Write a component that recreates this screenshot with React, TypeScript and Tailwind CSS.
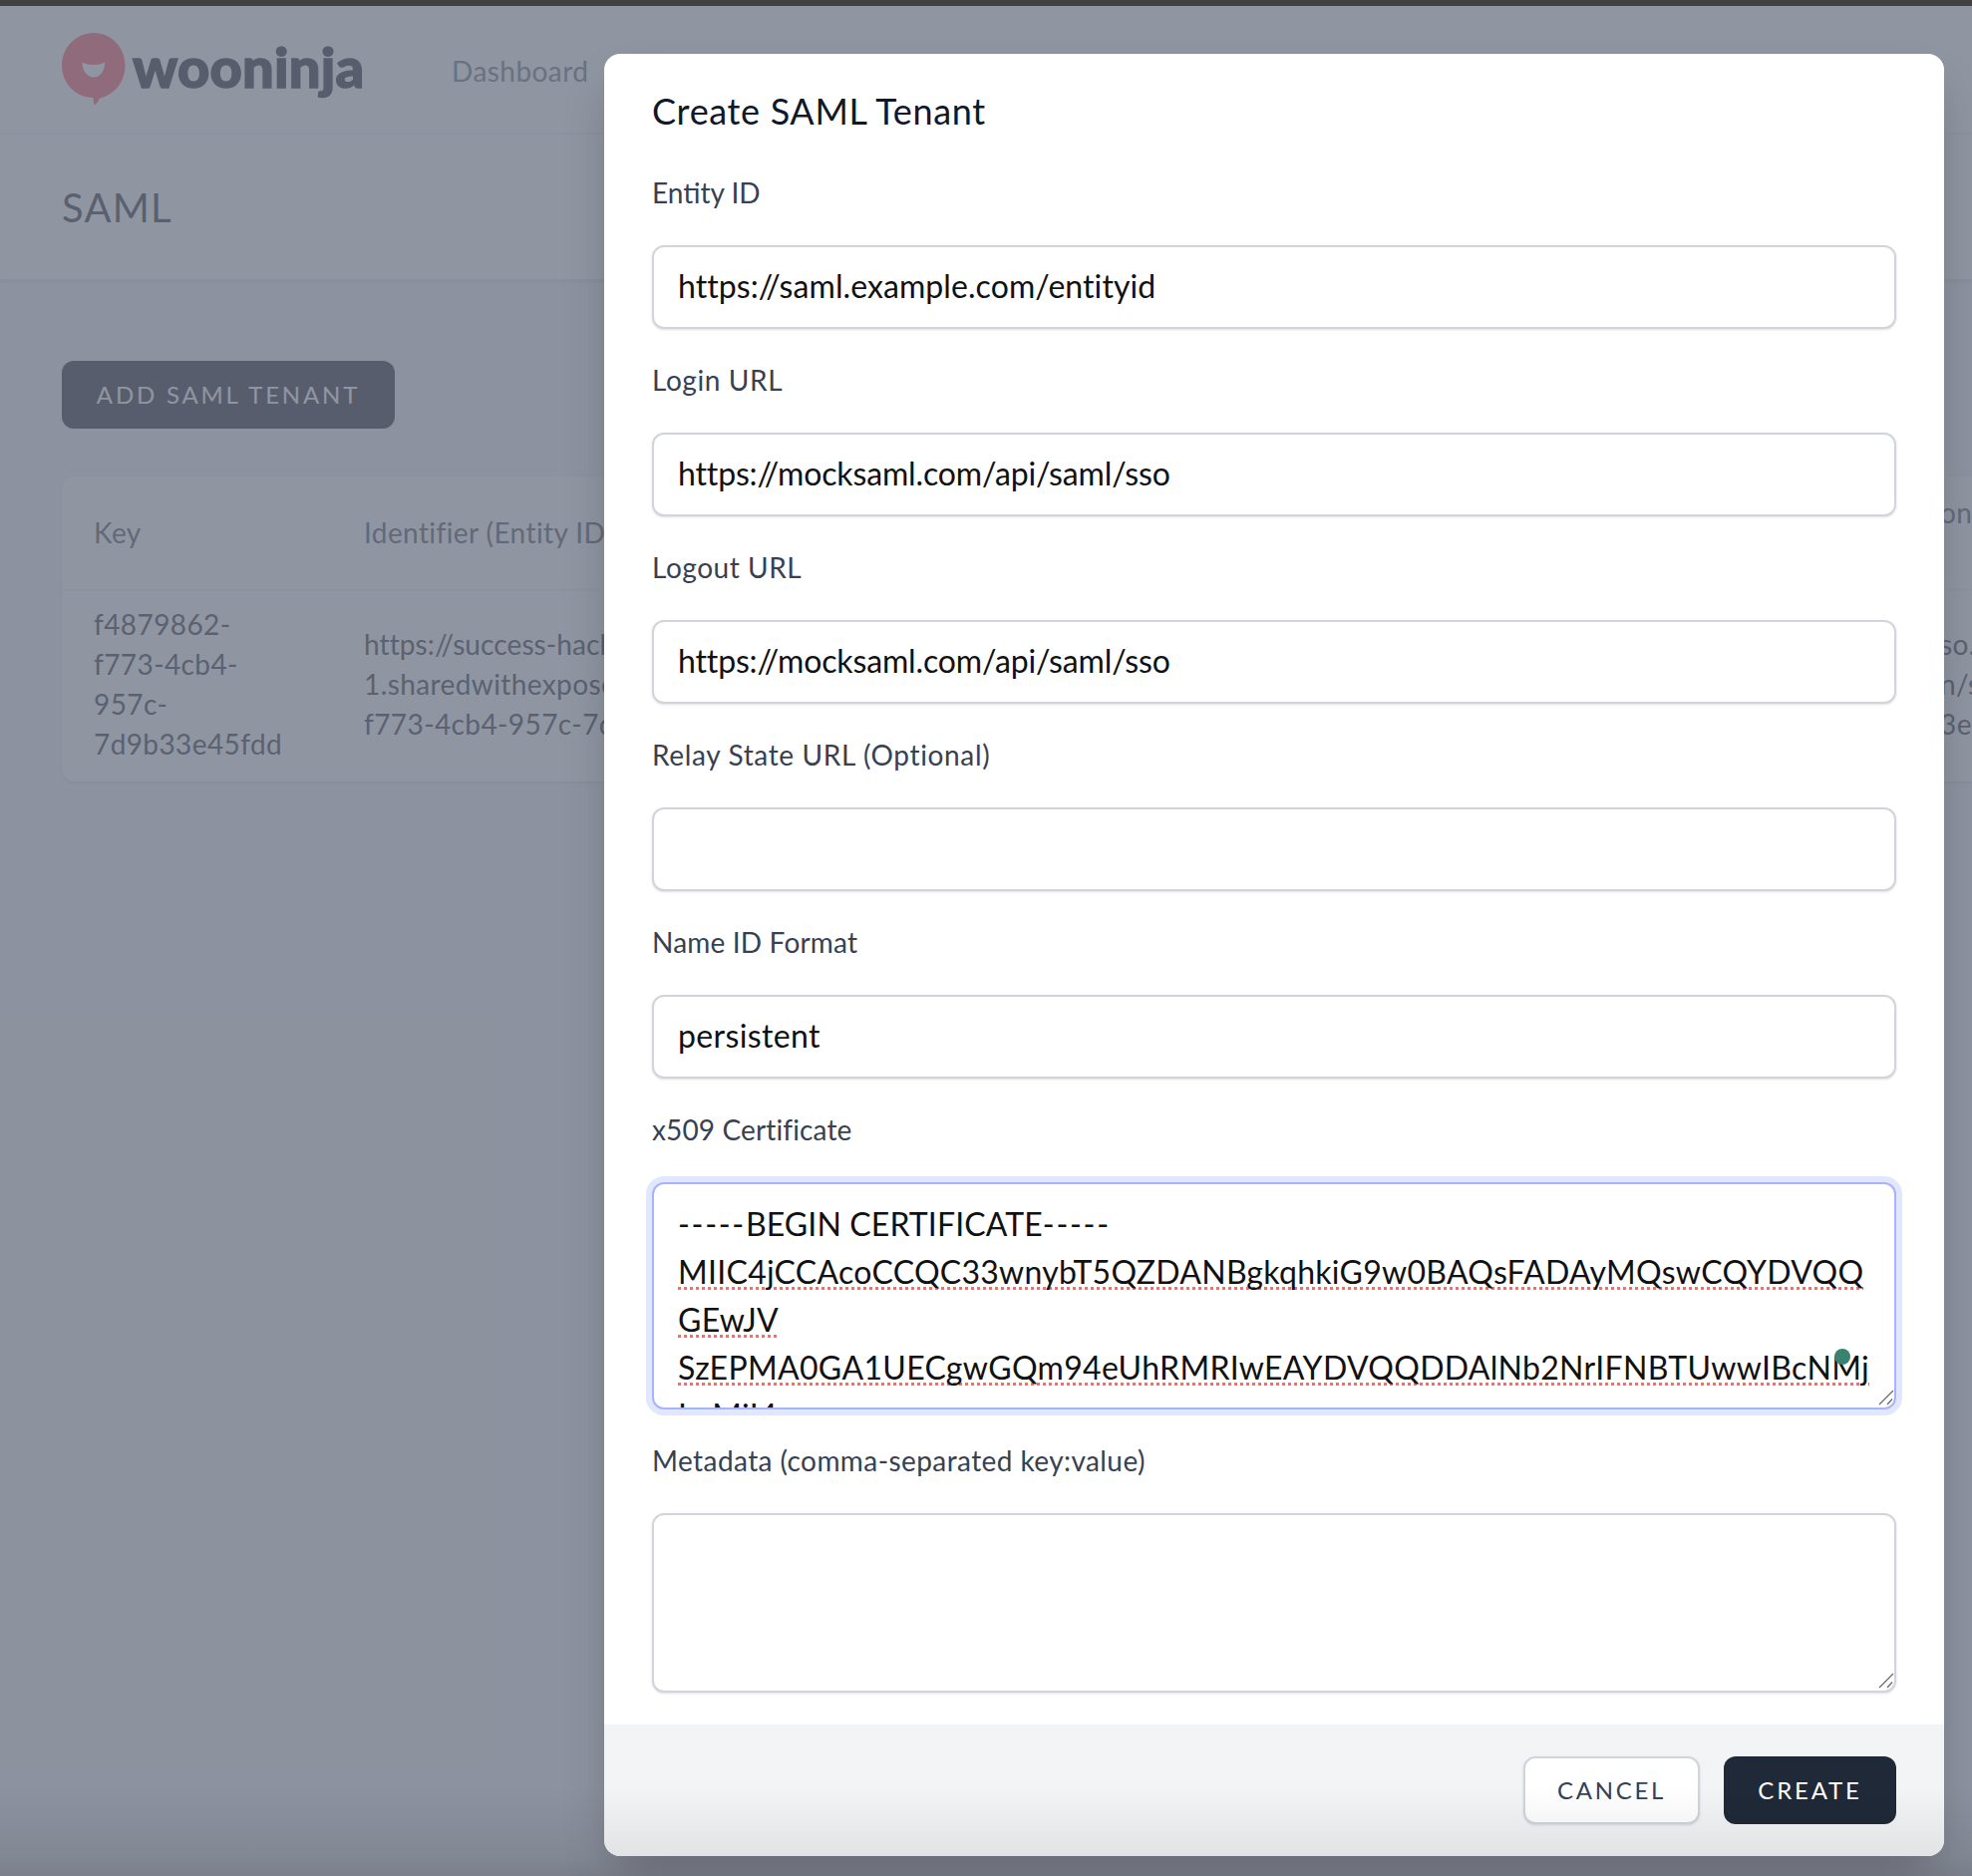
const certLines = [
  { text: 'MIIC4jCCAcoCCQC33wnybT5QZDANBgkqhkiG9w0BAQsFADAyMQswCQYDVQQ', flagged: true, tracking: 'tracking-[0.28px]' },
  { text: 'GEwJV', flagged: true, tracking: 'tracking-[0.28px]' },
  { text: 'SzEPMA0GA1UECgwGQm94eUhRMRIwEAYDVQQDDAlNb2NrIFNBTUwwIBcNMj', flagged: true, tracking: 'tracking-[0.33px]' },
  { text: 'IwMjI4', flagged: false, tracking: 'tracking-[0.3px]' },
]

function Logo() {
  return (
    <div className="flex w-[303px] items-center gap-[7px]">
      <svg width="64" height="74" viewBox="0 0 64 74" className="shrink-0">
        <path
          d="M32 0C49.5 0 63.5 14.5 63.5 32.5C63.5 50 52 62.5 38 65.5C37 68 35 71 32.5 72.5C32 70 31.5 67.5 31.5 65C14 65 0 50.5 0 32.5C0 14.5 14.5 0 32 0Z"
          fill="#ff5a6c"
        />
        <path
          d="M20.5 29.5C23 31 26 32 31.5 32C37 32 40.5 31 43 29.5C43.5 37 39 44.5 32 44.5C25 44.5 20 37 20.5 29.5Z"
          fill="#ffffff"
        />
      </svg>
      <span className="pb-[6px] font-[Lato,sans-serif] text-[56px] leading-none font-black tracking-[0.2px] text-[#272230] [-webkit-text-stroke:1.5px_#272230]">wooninja</span>
    </div>
  )
}

function Field({ label, labelClass, value, valueClass }: { label: string; labelClass: string; value: string; valueClass: string }) {
  return (
    <div className="flex flex-col gap-[32px]">
      <label className={`pb-[2px] text-[28px] leading-[38px] text-[#374151] ${labelClass}`}>{label}</label>
      <input
        readOnly
        defaultValue={value}
        className={`h-[84px] w-full rounded-[12px] border-2 border-[#d1d5db] bg-white px-[24px] pb-[3px] text-[32px] leading-[48px] text-[#111111] shadow-sm outline-none ${valueClass}`}
      />
    </div>
  )
}

function Grip() {
  return (
    <svg width="16" height="16" viewBox="0 0 16 16" className="pointer-events-none absolute right-[2px] bottom-[4px]">
      <path d="M1 15L15 1M9 15L14 9.5" stroke="#6a6a6a" strokeWidth="1.3" fill="none" />
    </svg>
  )
}

export default function App() {
  return (
    <div className="relative h-[1882px] w-[1978px] overflow-hidden bg-[#f3f4f6] font-[Lato,'Noto_Sans',sans-serif]">

      {/* Page behind the dialog */}
      <div className="relative z-10 h-[6px] bg-[#414141]" />
      <div className="bg-white">
        <div className="flex h-[129px] items-center border-b-2 border-[#f3f4f6] pl-[62px]">
          <Logo />
          <span className="ml-[88px] pt-[2px] text-[28px] leading-[38px] tracking-[0.45px] text-[#6b7280]">Dashboard</span>
        </div>
        <div className="flex h-[147px] items-center border-b-2 border-[#e5e7eb] pl-[62px] shadow-sm">
          <h1 className="text-[40px] leading-[56px] tracking-[1.2px] text-[#2c2f3c]">SAML</h1>
        </div>
      </div>
      <div className="px-[62px] pt-[80px]">
        <button className="h-[68px] w-[334px] rounded-[12px] bg-[#272230] text-[24px] tracking-[2.8px] text-white">
          ADD SAML TENANT
        </button>
        <table className="mt-[48px] w-[2052px] table-fixed rounded-[12px] bg-white text-left text-[28px] leading-[40px] tracking-[0.4px] shadow-sm">
          <colgroup>
            <col className="w-[271px]" />
            <col className="w-[1581px]" />
            <col className="w-[200px]" />
          </colgroup>
          <thead>
            <tr className="h-[114px] border-b-2 border-[#f3f4f6] text-[#4b4f5c]">
              <th className="pb-[2px] pl-[32px] font-normal">Key</th>
              <th className="pb-[2px] pl-[32px] font-normal">Identifier (Entity ID)</th>
              <th className="pb-[2px] pl-[32px] font-normal">on<br />&nbsp;</th>
            </tr>
          </thead>
          <tbody className="text-[#2f3240]">
            <tr className="h-[192px]">
              <td className="pb-[5px] pl-[32px]">f4879862-<br />f773-4cb4-<br />957c-<br />7d9b33e45fdd</td>
              <td className="pb-[5px] pl-[32px]"><span className="tracking-[0.1px]">https://success-hack-</span><br />1.sharedwithexpose.com/<br />f773-4cb4-957c-7d9b33e45fdd</td>
              <td className="pb-[5px] pl-[32px]">so.<br />n/s<br />3e</td>
            </tr>
          </tbody>
        </table>
      </div>

      {/* Backdrop and dialog */}
      <div className="absolute inset-0 flex items-start justify-end bg-gray-500/75 pt-[54px] pr-[28px]">
        <div className="w-[1344px] overflow-hidden rounded-[16px] bg-white shadow-2xl">
          <div className="flex flex-col gap-[32px] px-[48px] py-[32px]">
            <h2 className="pb-[5px] text-[36px] leading-[51px] tracking-[0.66px] text-[#111827]">Create SAML Tenant</h2>
            <Field label="Entity ID" labelClass="tracking-normal" value="https://saml.example.com/entityid" valueClass="tracking-[0.08px]" />
            <Field label="Login URL" labelClass="tracking-[0.6px]" value="https://mocksaml.com/api/saml/sso" valueClass="tracking-[-0.15px]" />
            <Field label="Logout URL" labelClass="tracking-[0.55px]" value="https://mocksaml.com/api/saml/sso" valueClass="tracking-[-0.15px]" />
            <Field label="Relay State URL (Optional)" labelClass="tracking-[0.65px]" value="" valueClass="tracking-normal" />
            <Field label="Name ID Format" labelClass="tracking-[0.18px]" value="persistent" valueClass="tracking-[0.38px]" />

            <div className="flex flex-col gap-[32px]">
              <label className="pb-[2px] text-[28px] leading-[38px] tracking-[0.13px] text-[#374151]">x509 Certificate</label>
              <div className="relative">
                <div className="h-[228px] overflow-hidden rounded-[12px] border-2 border-[#a5b4fc] bg-white px-[24px] py-[16px] text-[32px] leading-[48px] whitespace-nowrap text-[#111111] shadow-[0_0_0_6px_#e0e7ff]">
                  <div>
                    <span className="tracking-[1.7px]">-----</span>
                    <span className="tracking-[0.12px]">BEGIN CERTIFICATE</span>
                    <span className="tracking-[1.7px]">-----</span>
                  </div>
                  {certLines.map(line => (
                    <div key={line.text}>
                      <span className={`${line.tracking} ${line.flagged ? 'underline decoration-[#ef6f6c] decoration-dotted decoration-[3px] underline-offset-[3px] [text-decoration-skip-ink:none]' : ''}`}>
                        {line.text}
                      </span>
                    </div>
                  ))}
                </div>
                <div className="absolute top-[167px] left-[1186px] h-[16px] w-[16px] rounded-full bg-[#3a8270]" />
                <Grip />
              </div>
            </div>

            <div className="flex flex-col gap-[32px]">
              <label className="pb-[2px] text-[28px] leading-[38px] tracking-[0.42px] text-[#374151]">Metadata (comma-separated key:value)</label>
              <div className="relative">
                <textarea
                  readOnly
                  rows={3}
                  className="block h-[180px] w-full resize-none rounded-[12px] border-2 border-[#d1d5db] bg-white px-[24px] py-[16px] text-[32px] leading-[48px] shadow-sm outline-none"
                />
                <Grip />
              </div>
            </div>
          </div>

          <div className="flex justify-end gap-[24px] bg-[#f3f4f6] px-[48px] py-[32px]">
            <button className="h-[68px] w-[177px] rounded-[12px] border-2 border-[#d1d5db] bg-white text-[24px] tracking-[2.7px] text-[#374151] shadow-sm">
              CANCEL
            </button>
            <button className="h-[68px] w-[173px] rounded-[12px] bg-[#1f2937] text-[24px] tracking-[2.8px] text-white">
              CREATE
            </button>
          </div>
        </div>
      </div>

      {/* Dark fade along the bottom edge of the capture */}
      <div className="pointer-events-none absolute inset-x-0 bottom-0 h-[90px] bg-[linear-gradient(to_bottom,rgba(0,0,0,0),rgba(0,0,0,0.07)_78%,rgba(0,0,0,0.13))]" />
    </div>
  )
}
